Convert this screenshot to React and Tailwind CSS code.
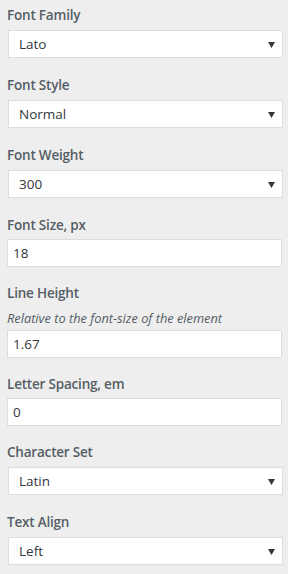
import React from 'react';

const fields = [
  { label: 'Font Family', type: 'select', value: 'Lato' },
  { label: 'Font Style', type: 'select', value: 'Normal' },
  { label: 'Font Weight', type: 'select', value: '300' },
  { label: 'Font Size, px', type: 'input', value: '18' },
  { label: 'Line Height', type: 'input', value: '1.67', note: 'Relative to the font-size of the element' },
  { label: 'Letter Spacing, em', type: 'input', value: '0' },
  { label: 'Character Set', type: 'select', value: 'Latin' },
  { label: 'Text Align', type: 'select', value: 'Left' },
];

const SelectBox = ({ value }) => (
  <div className="ml-[8px] mt-[3px] mb-[15px] w-[275px] h-[28px] bg-white border border-[#dddddd] flex items-center justify-between pl-[10px] pr-[7px]">
    <span className="text-[13.5px] text-[#32373c]">{value}</span>
    <svg width="7" height="6" viewBox="0 0 7 6" className="mt-[1px]">
      <path d="M0 0 H7 L3.5 6 Z" fill="#32373c" />
    </svg>
  </div>
);

const InputBox = ({ value }) => (
  <div className="ml-[7px] mt-[2px] mb-[14px] w-[275px] h-[28px] bg-white border border-[#dddddd] flex items-center pl-[5px]">
    <span className="text-[13.5px] text-[#32373c]">{value}</span>
  </div>
);

export default function App() {
  return (
    <div
      className="w-[288px] h-[574px] bg-[#eeeeee] pt-[3px]"
      style={{ fontFamily: '"Open Sans", "Noto Sans", sans-serif' }}
    >
      {fields.map((f) => (
        <div key={f.label}>
          <div className="pl-[7px] text-[13.5px] font-semibold tracking-[-0.2px] leading-[24px] text-[#555d66]">{f.label}</div>
          {f.note && (
            <div className="pl-[7px] text-[12.8px] italic leading-[20px] mt-[3px] text-[#555d66]">{f.note}</div>
          )}
          {f.type === 'select' ? <SelectBox value={f.value} /> : <InputBox value={f.value} />}
        </div>
      ))}
    </div>
  );
}
